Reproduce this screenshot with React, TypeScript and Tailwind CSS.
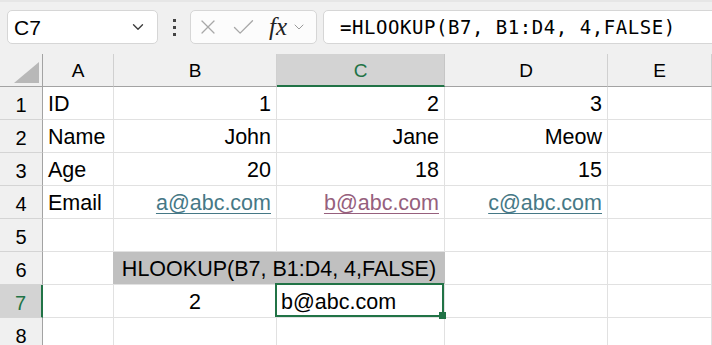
import { X, Check, ChevronDown } from 'lucide-react';

const COLS = ['A', 'B', 'C', 'D', 'E'];

type Cell = { text?: string; align?: 'left' | 'right' | 'center'; link?: 'blue' | 'purple' };

const ROWS: Cell[][] = [
  [{ text: 'ID' }, { text: '1', align: 'right' }, { text: '2', align: 'right' }, { text: '3', align: 'right' }, {}],
  [{ text: 'Name' }, { text: 'John', align: 'right' }, { text: 'Jane', align: 'right' }, { text: 'Meow', align: 'right' }, {}],
  [{ text: 'Age' }, { text: '20', align: 'right' }, { text: '18', align: 'right' }, { text: '15', align: 'right' }, {}],
  [
    { text: 'Email' },
    { text: 'a@abc.com', align: 'right', link: 'blue' },
    { text: 'b@abc.com', align: 'right', link: 'purple' },
    { text: 'c@abc.com', align: 'right', link: 'blue' },
    {},
  ],
  [{}, {}, {}, {}, {}],
];

const cellBase = 'flex items-center border-r border-b border-[#e1e1e1] bg-white pt-[2px] whitespace-nowrap overflow-hidden';
const rowHead = 'flex items-center justify-center border-r border-b border-r-[#a3a3a3] border-b-[#d4d4d4] bg-[#f0f0f0] pt-[3px] text-[20px] text-black';

function DataCell({ cell }: { cell: Cell }) {
  const align =
    cell.align === 'right' ? 'justify-end pr-[5px]' : cell.align === 'center' ? 'justify-center' : 'justify-start pl-[5px]';
  const color =
    cell.link === 'blue' ? 'text-[#467886] underline' : cell.link === 'purple' ? 'text-[#96607d] underline' : 'text-black';
  return (
    <div className={`${cellBase} ${align}`}>
      <span className={`${color} underline-offset-[3px] decoration-1`}>{cell.text}</span>
    </div>
  );
}

export default function App() {
  return (
    <div
      className="h-[345px] w-[712px] overflow-hidden bg-white"
      style={{ fontFamily: '"Liberation Sans", Arial, sans-serif' }}
    >
      {/* formula bar */}
      <div className="h-[54px] bg-[#f0f0f0] border-t-[2px] border-[#e6e6e6] flex items-start pt-[8px] pl-[7px]">
        <div className="h-[34px] w-[151px] rounded-[5px] border border-[#d6d6d6] bg-white flex items-center justify-between pl-[6px] pr-[10px]">
          <span className="text-[21px] text-black pt-[1px]">C7</span>
          <ChevronDown size={18} strokeWidth={1.8} className="text-[#3c3c3c]" />
        </div>
        <div className="w-[32px] h-[34px] flex flex-col items-center justify-center gap-[4px]">
          <span className="block w-[3px] h-[3px] bg-[#444]" />
          <span className="block w-[3px] h-[3px] bg-[#444]" />
          <span className="block w-[3px] h-[3px] bg-[#444]" />
        </div>
        <div className="h-[34px] w-[127px] rounded-[5px] border border-[#d6d6d6] bg-[#fcfcfc] flex items-center pl-[5px]">
          <X size={24} strokeWidth={1.2} className="text-[#a8a8a8]" />
          <Check size={27} strokeWidth={1.2} className="text-[#a8a8a8] ml-[10px]" />
          <span
            className="ml-[12px] text-[25px] italic text-[#222] leading-none pb-[2px]"
            style={{ fontFamily: '"Liberation Serif", "Times New Roman", serif' }}
          >
            fx
          </span>
          <ChevronDown size={16} strokeWidth={1.5} className="text-[#9a9a9a] ml-[4px]" />
        </div>
        <div className="ml-[6px] h-[34px] flex-1 -mr-[20px] rounded-l-[5px] border border-[#d6d6d6] bg-white flex items-center pl-[16px]">
          <span
            className="text-[19px] tracking-[0.55px] text-black pt-[1px]"
            style={{ fontFamily: '"DejaVu Sans Mono", "Liberation Mono", monospace' }}
          >
            =HLOOKUP(B7, B1:D4, 4,FALSE)
          </span>
        </div>
      </div>

      {/* sheet */}
      <div className="grid grid-cols-[43px_71px_163px_168px_163px_1fr] auto-rows-[33px] text-[21.5px]">
        {/* header row */}
        <div className="relative bg-[#f0f0f0] border-r border-b border-[#a3a3a3]">
          <div className="absolute right-[3px] bottom-[3px] w-0 h-0 border-l-[25px] border-l-transparent border-b-[21px] border-b-[#b8b8b8]" />
        </div>
        {COLS.map(c =>
          c === 'C' ? (
            <div
              key={c}
              className="flex items-center justify-center bg-[#d3d3d3] border-r border-[#c6c6c6] border-b-2 border-b-[#217346] pt-[3px] text-[19px] text-[#217346]"
            >
              C
            </div>
          ) : (
            <div
              key={c}
              className="flex items-center justify-center bg-[#f0f0f0] border-r border-r-[#d0d0d0] border-b border-b-[#a3a3a3] pt-[3px] text-[19px] text-black"
            >
              {c}
            </div>
          ),
        )}

        {/* rows 1-5 */}
        {ROWS.map((row, i) => (
          <div key={i} className="contents">
            <div className={rowHead}>{i + 1}</div>
            {row.map((cell, j) => (
              <DataCell key={j} cell={cell} />
            ))}
          </div>
        ))}

        {/* row 6 */}
        <div className={rowHead}>6</div>
        <DataCell cell={{}} />
        <div className="col-span-2 -ml-px flex items-center justify-center bg-[#c0c0c0] border-b border-[#e1e1e1] pt-[2px] text-black whitespace-nowrap">
          HLOOKUP(B7, B1:D4, 4,FALSE)
        </div>
        <DataCell cell={{}} />
        <DataCell cell={{}} />

        {/* row 7 */}
        <div className="flex items-center justify-center bg-[#d3d3d3] border-r-2 border-r-[#217346] border-b border-b-[#d4d4d4] pt-[3px] text-[20px] text-[#217346]">
          7
        </div>
        <DataCell cell={{}} />
        <DataCell cell={{ text: '2', align: 'center' }} />
        <div className={`${cellBase} relative justify-start pl-[4px] overflow-visible`}>
          <span className="text-black">b@abc.com</span>
          <div className="absolute -left-[2px] -top-[2px] right-0 bottom-0 border-2 border-[#217346]">
            <div className="absolute -right-[4px] -bottom-[4px] w-[7px] h-[7px] bg-[#217346]" />
          </div>
        </div>
        <DataCell cell={{}} />
        <DataCell cell={{}} />

        {/* row 8 */}
        <div className={rowHead}>8</div>
        <DataCell cell={{}} />
        <DataCell cell={{}} />
        <DataCell cell={{}} />
        <DataCell cell={{}} />
        <DataCell cell={{}} />
      </div>
    </div>
  );
}
